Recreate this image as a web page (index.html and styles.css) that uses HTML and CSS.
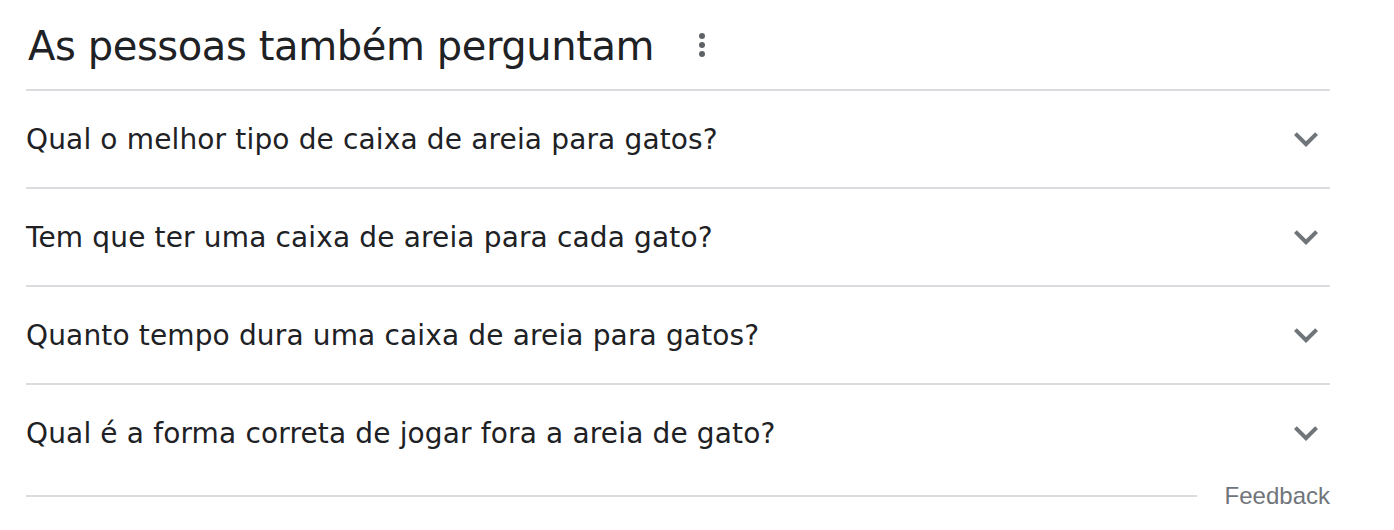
FILE: index.html
```html
<!DOCTYPE html>
<html lang="pt-BR">
<head>
    <meta charset="UTF-8">
    <meta name="viewport" content="width=device-width, initial-scale=1.0">
    <title>As pessoas também perguntam</title>
    <link rel="stylesheet" href="styles.css">
</head>
<body>
    <div class="paa">
        <div class="paa-header">
            <h2>As pessoas também perguntam</h2>
            <svg class="more-icon" viewBox="0 0 24 24" width="36" height="36">
                <circle cx="12" cy="6" r="2"></circle>
                <circle cx="12" cy="12" r="2"></circle>
                <circle cx="12" cy="18" r="2"></circle>
            </svg>
        </div>

        <div class="question">
            <span>Qual o melhor tipo de caixa de areia para gatos?</span>
            <svg class="chevron" viewBox="0 0 24 24" width="48" height="48"><path d="M16.59 8.59L12 13.17 7.41 8.59 6 10l6 6 6-6z"></path></svg>
        </div>
        <div class="question">
            <span>Tem que ter uma caixa de areia para cada gato?</span>
            <svg class="chevron" viewBox="0 0 24 24" width="48" height="48"><path d="M16.59 8.59L12 13.17 7.41 8.59 6 10l6 6 6-6z"></path></svg>
        </div>
        <div class="question">
            <span>Quanto tempo dura uma caixa de areia para gatos?</span>
            <svg class="chevron" viewBox="0 0 24 24" width="48" height="48"><path d="M16.59 8.59L12 13.17 7.41 8.59 6 10l6 6 6-6z"></path></svg>
        </div>
        <div class="question">
            <span>Qual é a forma correta de jogar fora a areia de gato?</span>
            <svg class="chevron" viewBox="0 0 24 24" width="48" height="48"><path d="M16.59 8.59L12 13.17 7.41 8.59 6 10l6 6 6-6z"></path></svg>
        </div>

        <div class="paa-footer">
            <div class="footer-line"></div>
            <a class="feedback" href="#">Feedback</a>
        </div>
    </div>
</body>
</html>
```

FILE: styles.css
```css
body {
    margin: 0;
    background: #fff;
    font-family: 'DejaVu Sans', sans-serif;
    color: #202124;
}

.paa {
    width: 1304px;
    margin-left: 26px;
}

.paa-header {
    display: flex;
    align-items: center;
    height: 89px;
}

.paa-header h2 {
    margin: 2px 0 0 2px;
    font-size: 40px;
    font-weight: 400;
    line-height: 48px;
    letter-spacing: -0.4px;
}

.more-icon {
    fill: #5f6368;
    margin-left: 30px;
}

.question {
    display: flex;
    align-items: center;
    justify-content: space-between;
    height: 96px;
    border-top: 2px solid #dadce0;
    font-size: 28px;
    letter-spacing: 0.15px;
}

.chevron {
    fill: #70757a;
}

.paa-footer {
    display: flex;
    align-items: center;
    height: 30px;
}

.footer-line {
    flex: 1;
    height: 2px;
    background: #dadce0;
}

.feedback {
    margin-left: 28px;
    font-family: 'Liberation Sans', Arial, sans-serif;
    font-size: 24px;
    color: #70757a;
    text-decoration: none;
}
```
